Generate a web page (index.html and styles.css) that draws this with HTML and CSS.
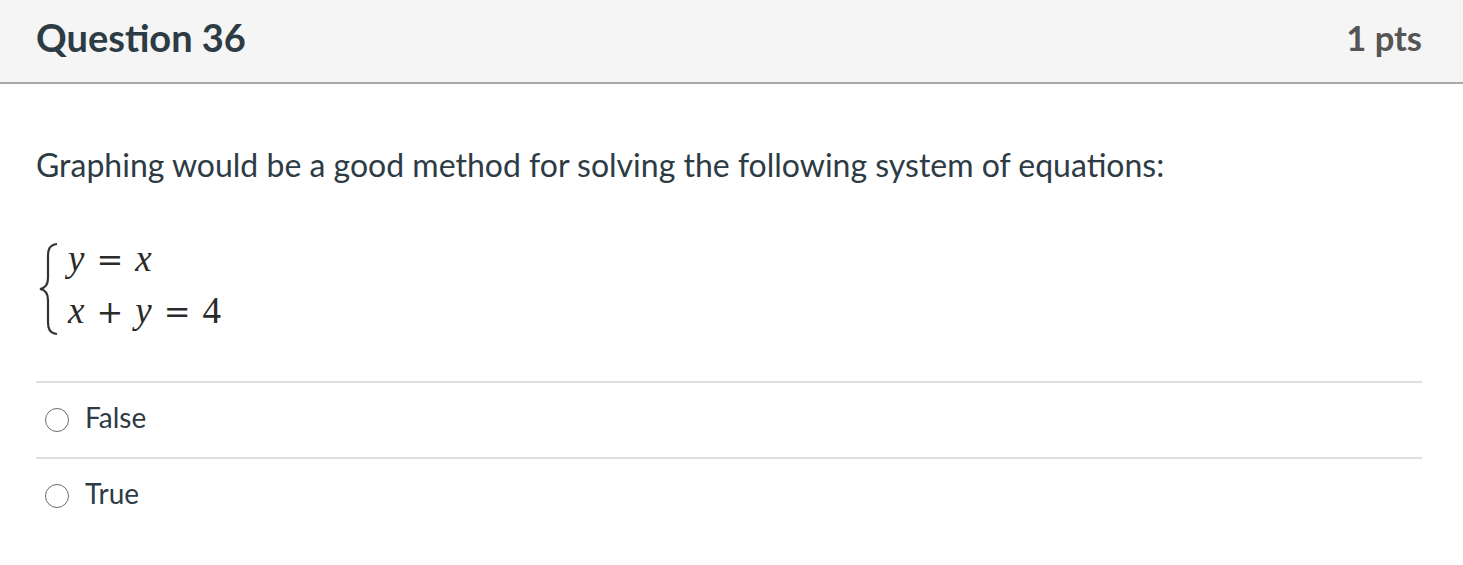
FILE: index.html
```html
<!DOCTYPE html>
<html>
<head>
<meta charset="utf-8">
<link rel="stylesheet" href="styles.css">
</head>
<body>
<div class="question">
  <div class="header">
    <div class="title">Question 36</div>
    <div class="pts">1 pts</div>
  </div>
  <div class="content">
    <p class="text">Graphing would be a good method for solving the following system of equations:</p>
    <div class="system">
      <svg class="brace" width="22" height="94" viewBox="0 0 22 94">
        <path d="M19 2 C11 3 10 8 10 14 L10 36 C10 42 8 46 2 47 C8 48 10 52 10 58 L10 80 C10 86 11 91 19 92" fill="none" stroke="#333" stroke-width="2.2"/>
      </svg>
      <div class="eqs">
        <div class="eq"><i>y</i><span class="op">=</span><i>x</i></div>
        <div class="eq"><i>x</i><span class="op">+</span><i>y</i><span class="op">=</span>4</div>
      </div>
    </div>
    <div class="answers">
      <label class="answer"><span class="radio"></span><span class="label">False</span></label>
      <label class="answer"><span class="radio"></span><span class="label">True</span></label>
    </div>
  </div>
</div>
</body>
</html>
```
FILE: styles.css
```css
html, body {
  margin: 0;
  padding: 0;
  background: #fff;
}
.question {
  font-family: Lato, "Noto Sans", sans-serif;
  color: #2d3b45;
}
.header {
  display: flex;
  justify-content: space-between;
  align-items: center;
  height: 84px;
  box-sizing: border-box;
  padding: 0 41px 0 36px;
  background: #f5f5f5;
  border-bottom: 2px solid #a8a8a8;
}
.title {
  font-size: 38px;
  font-weight: 700;
  color: #2d3b45;
  margin-top: -8px;
}
.pts {
  font-size: 34.5px;
  font-weight: 700;
  color: #555;
  margin-top: -8px;
}
.content {
  padding: 0 41px 0 36px;
}
.text {
  margin: 0;
  padding-top: 60px;
  font-size: 32px;
  line-height: 42px;
}
.system {
  display: flex;
  align-items: center;
  margin-top: 55px;
  height: 96px;
}
.brace {
  margin-left: 2px;
  margin-right: 8px;
}
.eqs {
  font-family: "Liberation Serif", "Times New Roman", serif;
  font-size: 37px;
  color: #2a2a2a;
  display: flex;
  flex-direction: column;
  gap: 11px;
  line-height: 40px;
  margin-top: -8px;
}
.eq {
  white-space: nowrap;
}
.eq i {
  font-style: italic;
}
.op {
  font-family: "DejaVu Serif", serif;
  font-size: 32px;
  margin: 0 12px;
  font-style: normal;
}
.answers {
  margin-top: 44px;
}
.answer {
  display: flex;
  align-items: center;
  height: 76px;
  border-top: 2px solid #dedede;
  box-sizing: border-box;
}
.radio {
  width: 24px;
  height: 24px;
  border: 1.6px solid #6b6b6b;
  border-radius: 50%;
  margin-left: 9px;
  margin-right: 16px;
  box-sizing: border-box;
}
.label {
  font-size: 28px;
  color: #2d3b45;
  margin-top: -6px;
}
```
